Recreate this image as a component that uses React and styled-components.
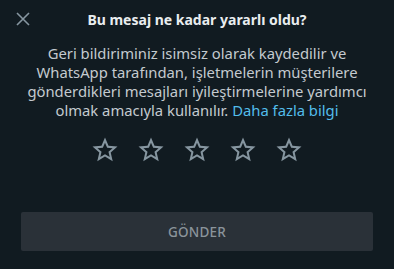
import React, { useState } from "react";
import styled, { createGlobalStyle } from "styled-components";

const Global = createGlobalStyle`
  html, body { margin: 0; padding: 0; background: #111b21; }
  body { font-family: "Noto Sans", "Open Sans", sans-serif; }
`;

const Sheet = styled.div`
  width: 394px;
  height: 269px;
  background: #111b21;
  display: flex;
  flex-direction: column;
  box-sizing: border-box;
`;

const Header = styled.div`
  position: relative;
  height: 39px;
  display: flex;
  align-items: center;
  justify-content: center;
`;

const CloseButton = styled.button`
  position: absolute;
  left: 11px;
  top: 7px;
  width: 24px;
  height: 24px;
  padding: 0;
  border: none;
  background: transparent;
  display: flex;
  align-items: center;
  justify-content: center;
  cursor: pointer;
`;

const Title = styled.h1`
  margin: 0;
  font-size: 14px;
  font-weight: 700;
  color: #e9edef;
  letter-spacing: 0;
`;

const Body = styled.p`
  margin: 5px 0 0;
  padding: 0 14px;
  text-align: center;
  font-size: 14.8px;
  line-height: 19px;
  color: #c4cacf;
`;

const Link = styled.a`
  color: #53bdeb;
  text-decoration: none;
`;

const Stars = styled.div`
  display: flex;
  justify-content: center;
  gap: 16px;
  margin-top: 15px;
`;

const StarButton = styled.button`
  width: 30px;
  height: 30px;
  padding: 0;
  border: none;
  background: transparent;
  cursor: pointer;
  display: flex;
`;

const SendButton = styled.button`
  margin: 47px 21px 0;
  height: 39px;
  border: none;
  border-radius: 2px;
  background: #2a3138;
  color: #8a949b;
  font-family: inherit;
  font-size: 13.5px;
  font-weight: 500;
  letter-spacing: 0.2px;
  cursor: default;
`;

const StarIcon = ({ filled }) => (
  <svg width="30" height="30" viewBox="0 0 24 24">
    <path
      d="M22 9.24l-7.19-.62L12 2 9.19 8.63 2 9.24l5.46 4.73L5.82 21 12 17.27 18.18 21l-1.63-7.03L22 9.24zM12 15.4l-3.76 2.27 1-4.28-3.32-2.88 4.38-.38L12 6.1l1.71 4.04 4.38.38-3.32 2.88 1 4.28L12 15.4z"
      fill={filled ? "#00a884" : "#8696a0"}
    />
  </svg>
);

export default function App() {
  const [rating, setRating] = useState(0);
  return (
    <>
      <Global />
      <Sheet>
        <Header>
          <CloseButton aria-label="Kapat">
            <svg width="14" height="14" viewBox="0 0 14 14">
              <path d="M1 1L13 13M13 1L1 13" stroke="#8696a0" strokeWidth="1.6" />
            </svg>
          </CloseButton>
          <Title>Bu mesaj ne kadar yararlı oldu?</Title>
        </Header>
        <Body>
          Geri bildiriminiz isimsiz olarak kaydedilir ve WhatsApp tarafından,
          işletmelerin müşterilere gönderdikleri mesajları iyileştirmelerine
          yardımcı olmak amacıyla kullanılır. <Link href="#">Daha fazla bilgi</Link>
        </Body>
        <Stars>
          {[1, 2, 3, 4, 5].map((n) => (
            <StarButton key={n} onClick={() => setRating(n)} aria-label={`${n}`}>
              <StarIcon filled={n <= rating} />
            </StarButton>
          ))}
        </Stars>
        <SendButton>GÖNDER</SendButton>
      </Sheet>
    </>
  );
}
